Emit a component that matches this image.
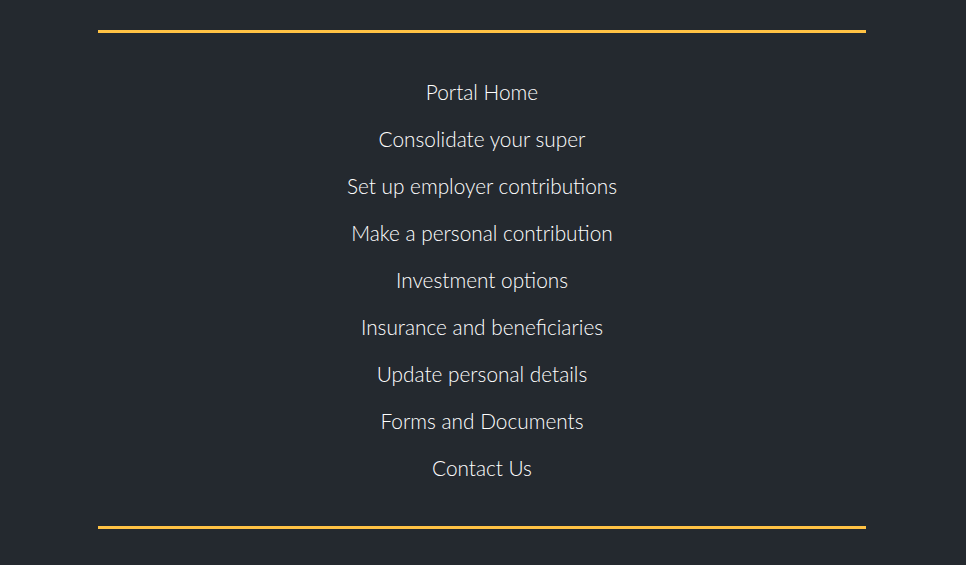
import React from 'react';

const links = [
    'Portal Home',
    'Consolidate your super',
    'Set up employer contributions',
    'Make a personal contribution',
    'Investment options',
    'Insurance and beneficiaries',
    'Update personal details',
    'Forms and Documents',
    'Contact Us',
];

const App: React.FC = () => {
    return (
        <div className="min-h-screen w-full bg-[#24292f] pt-[30px]" style={{ fontFamily: 'Lato, "Open Sans", sans-serif' }}>
            <div className="ml-[98px] w-[768px]">
                <div className="h-[3px] bg-[#ffc244]" />
                <ul className="pt-[35px] pb-[35px] text-center">
                    {links.map(label => (
                        <li key={label} className="h-[47px]">
                            <a href="#" className="block text-[20.8px] leading-[47px] font-light text-white hover:underline">{label}</a>
                        </li>
                    ))}
                </ul>
                <div className="h-[3px] bg-[#ffc244]" />
            </div>
        </div>
    );
};

export default App;
